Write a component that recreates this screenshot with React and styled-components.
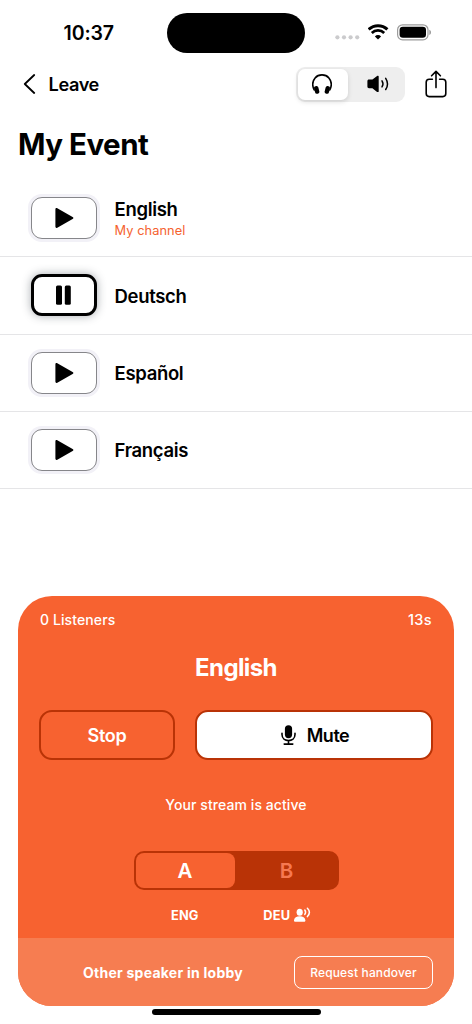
import { useState } from "react";
import styled, { createGlobalStyle } from "styled-components";

const GlobalStyle = createGlobalStyle`
  * {
    box-sizing: border-box;
  }
  body {
    margin: 0;
    background: #fff;
    color: #000;
    font-family: Inter, "Liberation Sans", sans-serif;
    -webkit-font-smoothing: antialiased;
  }
  button {
    margin: 0;
    padding: 0;
    border: 0;
    background: none;
    color: inherit;
    font: inherit;
  }
  svg {
    display: block;
    flex: none;
  }
`;

const Screen = styled.div`
  display: flex;
  flex-direction: column;
  width: 472px;
  height: 1024px;
  overflow: hidden;
  background: #fff;
`;

const Label = styled.span`
  font-size: ${(p) => p.$size}px;
  font-weight: ${(p) => p.$weight || 400};
  letter-spacing: ${(p) => p.$spacing || 0}px;
  line-height: ${(p) => p.$line || 24}px;
  white-space: nowrap;
`;

const StatusBar = styled.div`
  display: grid;
  grid-template-columns: 167px 138px 1fr;
  height: 65px;
  align-items: center;
`;

const Clock = styled(Label)`
  padding-left: 63.5px;
`;

const Island = styled.div`
  height: 40px;
  border-radius: 20px;
  background: #000;
`;

const StatusIcons = styled.div`
  display: flex;
  align-items: center;
  gap: 8px;
  padding: 0 0 1px 29.5px;
`;

const NavBar = styled.div`
  display: flex;
  align-items: center;
  height: 38px;
  padding: 0 25px 0 23px;
`;

const BackButton = styled.button`
  display: flex;
  align-items: center;
  gap: 12.5px;
  margin-right: auto;
`;

const Output = styled.div`
  display: flex;
  width: 109px;
  height: 35px;
  padding: 2px 0 2px 2px;
  border-radius: 9px;
  background: #eeeeee;
`;

const OutputButton = styled.button`
  display: flex;
  align-items: center;
  justify-content: center;
  flex: ${(p) => (p.$active ? "none" : 1)};
  width: 50px;
  height: 31px;
  padding: ${(p) => (p.$active ? "0 2px 0 0" : "0 0 0 3px")};
  border-radius: 7px;
  background: ${(p) => (p.$active ? "#fff" : "transparent")};
  box-shadow: ${(p) => (p.$active ? "0 2px 5px rgba(0, 0, 0, 0.13)" : "none")};
`;

const ShareButton = styled.button`
  margin-left: 20px;
`;

const Title = styled.h1`
  height: 77px;
  margin: 0;
  padding: 22.5px 18px 0;
  font-size: 29.5px;
  font-weight: 700;
  line-height: 36px;
  letter-spacing: -0.5px;
`;

const Channels = styled.div`
  display: flex;
  flex-direction: column;
`;

const ChannelRow = styled.div`
  display: flex;
  align-items: center;
  gap: 18px;
  height: 77.3px;
  padding-left: 30.5px;
  border-bottom: 1px solid #e5e5e7;
`;

const PlayButton = styled.button`
  display: flex;
  align-items: center;
  justify-content: center;
  width: 66px;
  height: 42px;
  border: ${(p) => (p.$playing ? "3px solid #000" : "1px solid #86868a")};
  border-radius: 11px;
  background: #fff;
  box-shadow: ${(p) =>
    p.$playing ? "0 0 10px rgba(40, 50, 60, 0.4)" : "0 0 0 3px #f2f1f7"};
`;

const ChannelText = styled.div`
  display: flex;
  flex-direction: column;
  padding-top: ${(p) => (p.$own ? 2 : 0.6)}px;
`;

const OwnChannel = styled(Label)`
  color: #f5622f;
`;

const Card = styled.section`
  display: flex;
  flex-direction: column;
  width: 436px;
  height: 410px;
  margin: 106.8px 18px 0;
  border-radius: 34px;
  overflow: hidden;
  background: #f76230;
  color: #fff;
`;

const CardBody = styled.div`
  display: flex;
  flex-direction: column;
  align-items: center;
  height: 342.5px;
  padding: 12px 21px 0;
`;

const CardHead = styled.div`
  display: flex;
  justify-content: space-between;
  width: 100%;
  padding: 0 1px;
`;

const Channel = styled(Label)`
  margin-top: 19px;
`;

const Actions = styled.div`
  display: flex;
  justify-content: space-between;
  width: 100%;
  margin-top: 26px;
`;

const ActionButton = styled.button`
  display: flex;
  align-items: center;
  justify-content: center;
  gap: 11px;
  width: ${(p) => (p.$primary ? 238 : 136)}px;
  height: 50px;
  padding-left: ${(p) => (p.$primary ? 2 : 0)}px;
  border: 2px solid #b93306;
  border-radius: 13px;
  background: ${(p) => (p.$primary ? "#fff" : "transparent")};
  color: ${(p) => (p.$primary ? "#000" : "#fff")};
`;

const ActionLabel = styled(Label)`
  padding-top: 2px;
`;

const StreamState = styled(Label)`
  margin-top: 33px;
`;

const Lanes = styled.div`
  display: flex;
  width: 205px;
  height: 39px;
  margin-top: 34px;
  padding: 2px 0 2px 2px;
  border-radius: 10px;
  background: #b93306;
`;

const Lane = styled.button`
  flex: ${(p) => (p.$active ? "none" : 1)};
  width: 99px;
  height: 35px;
  padding-top: 1px;
  border-radius: 8px;
  background: ${(p) => (p.$active ? "#f76230" : "transparent")};
  color: ${(p) => (p.$active ? "#fff" : "#f67850")};
`;

const LaneNames = styled.div`
  display: grid;
  grid-template-columns: 1fr 1fr;
  width: 205px;
  margin-top: 14px;
`;

const LaneName = styled.div`
  display: flex;
  align-items: center;
  justify-content: center;
  gap: 4px;
`;

const Lobby = styled.div`
  display: flex;
  flex: 1;
  align-items: center;
  justify-content: space-between;
  padding: 0 21px 0 65px;
  background: #f67d51;
`;

const HandoverButton = styled.button`
  width: 139px;
  height: 33px;
  border: 1px solid #fff;
  border-radius: 8px;
  line-height: 1;
`;

const HomeIndicator = styled.div`
  width: 169px;
  height: 6px;
  margin: 3px auto 0;
  border-radius: 3px;
  background: #000;
`;

const SignalDots = () => (
  <svg width="25" height="18" viewBox="0 0 25 18" fill="#cbcbcd">
    <circle cx="2.4" cy="14.3" r="2.1" />
    <circle cx="9" cy="14.3" r="2.1" />
    <circle cx="15.6" cy="14.3" r="2.1" />
    <circle cx="22.2" cy="14.3" r="2.1" />
  </svg>
);

const Wifi = () => (
  <svg width="21" height="16" viewBox="0.5 0 21 16" fill="none" stroke="#000">
    <path d="M1.1 5.4A13.6 13.6 0 0 1 19.9 5.4" strokeWidth="3" />
    <path d="M4.3 9A8.8 8.8 0 0 1 16.7 9" strokeWidth="2.7" />
    <path
      d="M10.5 15.6L7.4 12.4A4.3 4.3 0 0 1 13.6 12.4Z"
      fill="#000"
      stroke="none"
    />
  </svg>
);

const Battery = () => (
  <svg width="35" height="17" viewBox="0 0 35 17">
    <rect
      x="0.6"
      y="0.8"
      width="30.4"
      height="15"
      rx="5"
      fill="none"
      stroke="#9c9c9c"
      strokeWidth="1.2"
    />
    <rect x="2.6" y="2.8" width="26.4" height="11" rx="3.3" />
    <path d="M32.3 5.7C34.6 6.6 34.6 10 32.3 10.9Z" fill="#9c9c9c" />
  </svg>
);

const Chevron = () => (
  <svg width="13" height="20" viewBox="0 0 13 20" fill="none" stroke="#000">
    <path
      d="M11.2 1L1.8 10L11.2 19"
      strokeWidth="1.8"
      strokeLinecap="round"
      strokeLinejoin="round"
    />
  </svg>
);

const Headphones = () => (
  <svg width="20" height="20" viewBox="0 0 20 20">
    <path
      d="M2.2 16C0 11.5 .5 7 3.1 3.9C6.5-.1 13.5-.1 16.9 3.9C19.5 7 20 11.5 17.8 16"
      fill="none"
      stroke="#000"
      strokeWidth="1.6"
      strokeLinecap="round"
    />
    <rect
      x="2.5"
      y="12"
      width="4.4"
      height="7.8"
      rx="2"
      transform="rotate(-14 4.7 15.9)"
    />
    <rect
      x="13.1"
      y="12"
      width="4.4"
      height="7.8"
      rx="2"
      transform="rotate(14 15.3 15.9)"
    />
  </svg>
);

const Speaker = () => (
  <svg width="22" height="18" viewBox="0 0 22 18">
    <path d="M2 4.6H5.4L10.1.9C10.8.4 11.7.8 11.7 1.6V16.2C11.7 17 10.8 17.4 10.1 16.9L5.4 13.2H2C1 13.2.4 12.6.4 11.6V6.2C.4 5.2 1 4.6 2 4.6Z" />
    <g fill="none" stroke="#000" strokeWidth="1.5" strokeLinecap="round">
      <path d="M15 5.9Q17 8.9 15 11.9" />
      <path d="M18.7 3.3Q22.3 8.9 18.7 14.5" />
    </g>
  </svg>
);

const Share = () => (
  <svg
    width="22"
    height="28"
    viewBox="0 0 22 28"
    fill="none"
    stroke="#000"
    strokeWidth="1.6"
    strokeLinecap="round"
    strokeLinejoin="round"
  >
    <path d="M7.4 9.3H4.2C2.2 9.3 1.2 10.3 1.2 12.3V23.6C1.2 25.6 2.2 26.6 4.2 26.6H17.8C19.8 26.6 20.8 25.6 20.8 23.6V12.3C20.8 10.3 19.8 9.3 17.8 9.3H14.6" />
    <path d="M11 17.6V1.6M6.6 5.8L11 1.4L15.4 5.8" />
  </svg>
);

const Play = () => (
  <svg width="20" height="22" viewBox="0 0 20 22">
    <path d="M1.4 2.4V19.6C1.4 20.8 2.3 21.3 3.3 20.7L18.6 12C19.7 11.4 19.7 10.6 18.6 10L3.3 1.3C2.3.7 1.4 1.2 1.4 2.4Z" />
  </svg>
);

const Pause = () => (
  <svg width="15" height="20" viewBox="0 0 15 20">
    <rect x="0" y="0.4" width="6" height="19.4" rx="1.5" />
    <rect x="8.8" y="0.4" width="6" height="19.4" rx="1.5" />
  </svg>
);

const Mic = () => (
  <svg width="15" height="20" viewBox="0 0 15 20">
    <rect x="3.9" y="0.2" width="7.2" height="13" rx="3.6" />
    <path
      d="M1 8.3V9.6C1 17.6 14 17.6 14 9.6V8.3M7.5 15.6V19M3.2 19.1H11.8"
      fill="none"
      stroke="#000"
      strokeWidth="1.6"
      strokeLinecap="round"
    />
  </svg>
);

const Speaking = () => (
  <svg width="17" height="17" viewBox="0 0 17 17" fill="#fff">
    <ellipse cx="5.7" cy="5.2" rx="3.1" ry="3.5" />
    <path d="M0 13.2C.2 10.9 2.6 9.3 5.7 9.3S11.2 10.9 11.4 13.2C11.5 14.2 11 14.8 10 14.8H1.4C.4 14.8-.1 14.2 0 13.2Z" />
    <g fill="none" stroke="#fff" strokeWidth="1.5" strokeLinecap="round">
      <path d="M10.8 3Q12.4 5.2 10.8 7.4" />
      <path d="M13.4 1.2Q17.4 5.2 13.4 9.6" />
    </g>
  </svg>
);

const channels = [
  { id: 1, name: "English", own: true },
  { id: 2, name: "Deutsch" },
  { id: 3, name: "Español" },
  { id: 4, name: "Français" },
];

function ChannelList() {
  const [playing, setPlaying] = useState(2);

  return (
    <Channels>
      {channels.map((item) => (
        <ChannelRow key={item.id}>
          <PlayButton
            $playing={item.id === playing}
            onClick={() => setPlaying(item.id === playing ? null : item.id)}
          >
            {item.id === playing ? <Pause /> : <Play />}
          </PlayButton>
          <ChannelText $own={item.own}>
            <Label
              $size={18.5}
              $weight={600}
              $spacing={-0.32}
              $line={item.own ? 23.5 : 24}
            >
              {item.name}
            </Label>
            {item.own ? (
              <OwnChannel $size={12.8} $spacing={0.08} $line={18.5}>
                My channel
              </OwnChannel>
            ) : null}
          </ChannelText>
        </ChannelRow>
      ))}
    </Channels>
  );
}

function SpeakerCard() {
  const [lane, setLane] = useState("A");

  return (
    <Card>
      <CardBody>
        <CardHead>
          <Label $size={14} $weight={500} $spacing={0.1}>
            0 Listeners
          </Label>
          <Label $size={14.5} $weight={500} $spacing={0.4}>
            13s
          </Label>
        </CardHead>
        <Channel $size={24} $weight={700} $spacing={-0.6} $line={33}>
          English
        </Channel>
        <Actions>
          <ActionButton>
            <ActionLabel $size={18} $weight={600} $spacing={-0.25}>
              Stop
            </ActionLabel>
          </ActionButton>
          <ActionButton $primary>
            <Mic />
            <ActionLabel $size={18} $weight={600} $spacing={-0.5}>
              Mute
            </ActionLabel>
          </ActionButton>
        </Actions>
        <StreamState $size={14} $weight={500} $spacing={0.08}>
          Your stream is active
        </StreamState>
        <Lanes>
          {["A", "B"].map((name) => (
            <Lane
              key={name}
              $active={name === lane}
              onClick={() => setLane(name)}
            >
              <Label $size={20.5} $weight={600}>
                {name}
              </Label>
            </Lane>
          ))}
        </Lanes>
        <LaneNames>
          <LaneName>
            <Label $size={12.8} $weight={700} $spacing={0.15}>
              ENG
            </Label>
          </LaneName>
          <LaneName>
            <Label $size={12.8} $weight={700} $spacing={0.15}>
              DEU
            </Label>
            <Speaking />
          </LaneName>
        </LaneNames>
      </CardBody>
      <Lobby>
        <Label $size={14} $weight={700} $spacing={0.25} $line={25}>
          Other speaker in lobby
        </Label>
        <HandoverButton>
          <Label $size={12} $weight={500} $spacing={0.15} $line={16}>
            Request handover
          </Label>
        </HandoverButton>
      </Lobby>
    </Card>
  );
}

function App() {
  const [output, setOutput] = useState("headphones");

  return (
    <>
      <GlobalStyle />
      <Screen>
        <StatusBar>
          <Clock $size={19.5} $weight={600} $spacing={-0.1}>
            10:37
          </Clock>
          <Island />
          <StatusIcons>
            <SignalDots />
            <Wifi />
            <Battery />
          </StatusIcons>
        </StatusBar>
        <NavBar>
          <BackButton>
            <Chevron />
            <Label $size={18.2} $weight={600} $spacing={-0.4}>
              Leave
            </Label>
          </BackButton>
          <Output>
            <OutputButton
              $active={output === "headphones"}
              onClick={() => setOutput("headphones")}
            >
              <Headphones />
            </OutputButton>
            <OutputButton
              $active={output === "speaker"}
              onClick={() => setOutput("speaker")}
            >
              <Speaker />
            </OutputButton>
          </Output>
          <ShareButton>
            <Share />
          </ShareButton>
        </NavBar>
        <Title>My Event</Title>
        <ChannelList />
        <SpeakerCard />
        <HomeIndicator />
      </Screen>
    </>
  );
}

export default App;
